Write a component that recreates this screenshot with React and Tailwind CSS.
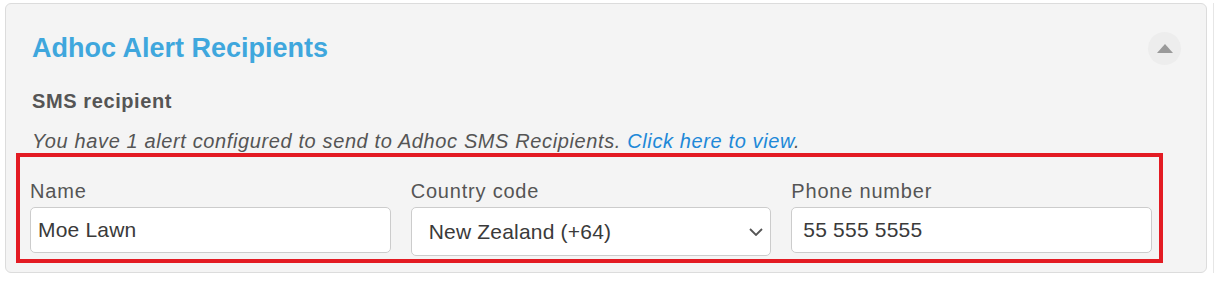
import React from 'react';

const fieldLabel = 'block text-[20px] leading-[24px] tracking-[0.8px] text-[#555] mb-[4px]';
const inputBox =
  'w-full h-[46px] rounded-[5px] border border-[#cccccc] bg-white px-[7px] text-[21px] tracking-[0.2px] text-[#3a3a3a] outline-none';

const App = () => {
  return (
    <div className="flex w-[1215px] h-[281px] bg-white font-['Liberation_Sans',Arial,sans-serif]">
      <div className="ml-[5px] mt-[3px] w-[1202px] h-[270px] rounded-[6px] border border-[#dcdcdc] bg-[#f4f4f4] pt-[27px] pl-[26px] pr-[25px] pb-[9px]">
        <div className="flex h-[34px] items-center justify-between">
          <h2 className="text-[27px] leading-[34px] font-bold text-[#3fa7dd]">Adhoc Alert Recipients</h2>
          <button className="flex h-[33px] w-[33px] items-center justify-center rounded-full bg-[#ededed]">
            <svg width="16" height="9" viewBox="0 0 16 9">
              <polygon points="0,9 8,0 16,9" fill="#9a9a9a" />
            </svg>
          </button>
        </div>

        <div className="mt-[24px] text-[20px] leading-[24px] tracking-[0.6px] font-bold text-[#555]">SMS recipient</div>

        <p className="mt-[16px] text-[20px] leading-[24px] tracking-[0.62px] italic text-[#555]">
          You have 1 alert configured to send to Adhoc SMS Recipients.{' '}
          <a href="#" className="text-[#2088d8]">Click here to view</a>.
        </p>

        {/* highlighted row */}
        <div className="ml-[-16px] w-[1147px] border-4 border-[#e31b23] pt-[22px] pb-[3px] pl-[10px] pr-[7px]">
          <div className="grid grid-cols-3 gap-x-[20px] items-start">
            <div>
              <label className={fieldLabel}>Name</label>
              <input className={inputBox} defaultValue="Moe Lawn" />
            </div>
            <div>
              <label className={fieldLabel}>Country code</label>
              <div className="relative">
                <select
                  className="w-full h-[49px] appearance-none rounded-[5px] border border-[#cccccc] bg-white pl-[17px] text-[21px] tracking-[0.2px] text-[#3a3a3a] outline-none"
                  defaultValue="nz"
                >
                  <option value="nz">New Zealand (+64)</option>
                  <option value="au">Australia (+61)</option>
                </select>
                <svg
                  className="pointer-events-none absolute right-[8px] top-[21px]"
                  width="14"
                  height="8"
                  viewBox="0 0 14 8"
                  fill="none"
                >
                  <path d="M1 1 L7 7 L13 1" stroke="#555" strokeWidth="1.8" />
                </svg>
              </div>
            </div>
            <div>
              <label className={fieldLabel}>Phone number</label>
              <input className={inputBox + ' px-[11px]'} defaultValue="55 555 5555" />
            </div>
          </div>
        </div>
      </div>
      <div className="ml-[6px] mt-[3px] h-[270px] w-[2px] border-l border-[#e6e6e6]" />
    </div>
  );
};

export default App;
